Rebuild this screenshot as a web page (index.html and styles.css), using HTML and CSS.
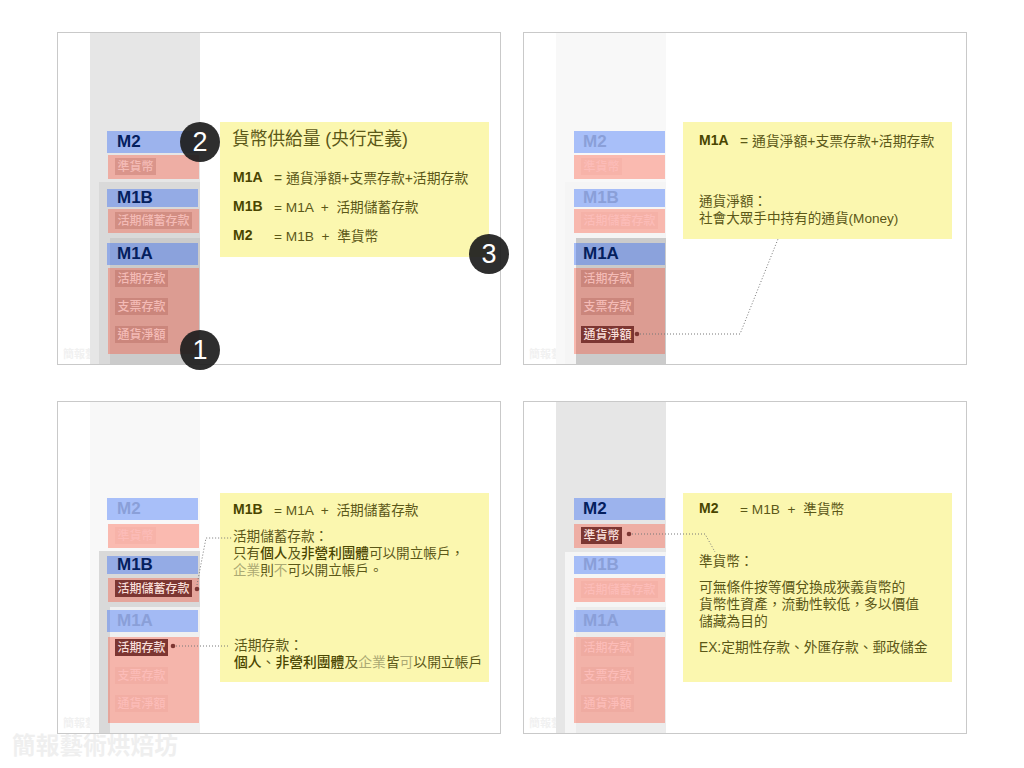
FILE: index.html
```html
<!DOCTYPE html>
<html lang="zh-Hant">
<head>
<meta charset="utf-8">
<title>貨幣供給量</title>
<link rel="stylesheet" href="styles.css">
</head>
<body>
<main class="page">
  <section class="slide s1">
    <div class="wm">簡報藝術烘焙坊</div>
    <div class="band b-m2 g-e6"></div><div class="band b-m1b g-d9"></div><div class="band b-m1a g-cb"></div>
    <div class="stack">
      <div class="bar h22"><span class="lab">M2</span></div>
      <div class="red r24"><span class="chip off">準貨幣</span></div>
      <div class="bar h18 sep"><span class="lab">M1B</span></div>
      <div class="red r24"><span class="chip off">活期儲蓄存款</span></div>
      <div class="bar h22 sep"><span class="lab">M1A</span></div>
      <div class="red r86"><span class="chip off">活期存款</span><span class="chip off">支票存款</span><span class="chip off">通貨淨額</span></div>
    </div>
    <div class="panel">
      <h2 class="head">貨幣供給量 (央行定義)</h2>
      <div class="rows">
        <div class="f"><b>M1A</b><span class="long">= 通貨淨額+支票存款+活期存款</span></div>
        <div class="f"><b>M1B</b><span>= M1A &nbsp;+ &nbsp;活期儲蓄存款</span></div>
        <div class="f"><b>M2</b><span>= M1B &nbsp;+ &nbsp;準貨幣</span></div>
      </div>
    </div>
    <div class="badge n2">2</div><div class="badge n1">1</div><div class="badge n3">3</div>
  </section>

  <section class="slide s2">
    <div class="wm">簡報藝術烘焙坊</div>
    <div class="band b-m2 g-f8"></div><div class="band b-m1b g-f5"></div><div class="band b-m1a g-cb"></div>
    <div class="stack">
      <div class="bar h22"><span class="lab dim">M2</span></div>
      <div class="red r24"><span class="chip faint">準貨幣</span></div>
      <div class="bar h18 sep"><span class="lab dim">M1B</span></div>
      <div class="red r24"><span class="chip faint">活期儲蓄存款</span></div>
      <div class="bar h22 sep"><span class="lab">M1A</span></div>
      <div class="red r86"><span class="chip off">活期存款</span><span class="chip off">支票存款</span><span class="chip on">通貨淨額</span></div>
    </div>
    <div class="panel">
      <div class="f"><b>M1A</b><span class="long">= 通貨淨額+支票存款+活期存款</span></div>
      <p class="para gap-a">通貨淨額：<br>社會大眾手中持有的通貨(Money)</p>
    </div>
    <svg class="wires" viewBox="0 0 442 331" aria-hidden="true">
      <polyline class="wire" points="113,301 216,301 254,206"/>
      <circle class="dot" cx="113" cy="301" r="2.3"/>
    </svg>
  </section>

  <section class="slide s3">
    <div class="wm">簡報藝術烘焙坊</div>
    <div class="band b-m2 g-f8"></div><div class="band b-m1b g-d9"></div><div class="band b-m1a g-f0"></div>
    <div class="stack">
      <div class="bar h22"><span class="lab dim">M2</span></div>
      <div class="red r24"><span class="chip faint">準貨幣</span></div>
      <div class="bar h18 sep"><span class="lab">M1B</span></div>
      <div class="red r24 first-tight"><span class="chip on">活期儲蓄存款</span></div>
      <div class="bar h22 sep"><span class="lab dim">M1A</span></div>
      <div class="red r86"><span class="chip on">活期存款</span><span class="chip faint">支票存款</span><span class="chip faint">通貨淨額</span></div>
    </div>
    <div class="panel">
      <div class="f"><b>M1B</b><span>= M1A &nbsp;+ &nbsp;活期儲蓄存款</span></div>
      <p class="para gap-b">活期儲蓄存款：<br>只有<strong>個人</strong>及<strong>非營利團體</strong>可以開立帳戶，<br><em>企業</em>則<em>不</em>可以開立帳戶。</p>
      <p class="para gap-c">活期存款：<br><strong>個人</strong>、<strong>非營利團體</strong>及<em>企業</em>皆<em>可</em>以開立帳戶</p>
    </div>
    <svg class="wires" viewBox="0 0 442 331" aria-hidden="true">
      <polyline class="wire" points="139,183 148,136 174,136"/>
      <polyline class="wire" points="115,244 172,244"/>
      <circle class="dot" cx="139" cy="187" r="2.3"/>
      <circle class="dot" cx="115" cy="244" r="2.3"/>
    </svg>
  </section>

  <section class="slide s4">
    <div class="wm">簡報藝術烘焙坊</div>
    <div class="band b-m2 g-e6"></div><div class="band b-m1b g-f5"></div><div class="band b-m1a g-ee"></div>
    <div class="stack">
      <div class="bar h22"><span class="lab">M2</span></div>
      <div class="red r24"><span class="chip on">準貨幣</span></div>
      <div class="bar h18 sep"><span class="lab dim">M1B</span></div>
      <div class="red r24"><span class="chip faint">活期儲蓄存款</span></div>
      <div class="bar h22 sep"><span class="lab dim">M1A</span></div>
      <div class="red r86"><span class="chip faint">活期存款</span><span class="chip faint">支票存款</span><span class="chip faint">通貨淨額</span></div>
    </div>
    <div class="panel">
      <div class="f"><b>M2</b><span>= M1B &nbsp;+ &nbsp;準貨幣</span></div>
      <p class="para gap-d">準貨幣：</p>
      <p class="para gap-e">可無條件按等價兌換成狹義貨幣的<br>貨幣性資產，流動性較低，多以價值<br>儲藏為目的</p>
      <p class="para gap-e">EX:定期性存款、外匯存款、郵政儲金</p>
    </div>
    <svg class="wires" viewBox="0 0 442 331" aria-hidden="true">
      <polyline class="wire" points="105,132 181,132 191,150"/>
      <circle class="dot" cx="105" cy="132" r="2.3"/>
    </svg>
  </section>
</main>
<footer class="brand">簡報藝術烘焙坊</footer>
</body>
</html>
```

FILE: styles.css
```css
html, body { margin: 0; padding: 0; }
body {
  width: 1024px;
  height: 768px;
  overflow: hidden;
  background: #fff;
  font-family: "Liberation Sans", "Noto Sans CJK TC", sans-serif;
}
.page {
  display: grid;
  grid-template-columns: 444px 444px;
  grid-template-rows: 333px 333px;
  gap: 36px 22px;
  padding: 32px 0 0 57px;
}
.slide {
  position: relative;
  box-sizing: border-box;
  border: 1px solid #c9c9c9;
  background: #fff;
}

/* faint mark under the bands */
.wm {
  position: absolute;
  left: 5px;
  bottom: 3px;
  font-size: 11px;
  line-height: 14px;
  font-weight: 700;
  color: #f1f1f1;
  white-space: nowrap;
}

/* grey group bands */
.band { position: absolute; bottom: 0; }
.b-m2 { left: 32px; width: 110px; top: 0; }
.b-m1b { left: 41px; width: 101px; top: 149px; }
.b-m1a { left: 52px; width: 90px; top: 205px; }
.s4 .b-m1b { top: 150px; }
.g-e6 { background: #e6e6e6; }
.g-d9 { background: #d9d9d9; }
.g-cb { background: #cbcbcb; }
.g-f8 { background: #f8f8f8; }
.g-f5 { background: #f5f5f5; }
.g-f0 { background: #f0f0f0; }
.g-ee { background: #ececec; }

/* stack of bars */
.stack {
  position: absolute;
  left: 49px;
  width: 91px;
  display: flex;
  flex-direction: column;
  --gap-a: 2px;
  --gap-b: 10px;
  --gap-c: 3px;
}
.s1 .stack, .s2 .stack { top: 98px; }
.s3 .stack, .s4 .stack { top: 96px; --gap-a: 4px; --gap-b: 8px; --gap-c: 5px; }
.bar {
  box-sizing: border-box;
  width: 91px;
  padding-left: 10px;
  background: rgba(15, 82, 253, .34);
  display: flex;
  align-items: center;
}
.s2 .bar, .s4 .bar { margin-left: 1px; padding-left: 9px; }
.h22 { height: 22px; }
.h18 { height: 18px; }
.sep { margin-top: var(--gap-b); }
.lab {
  font-size: 17px;
  font-weight: 700;
  line-height: 18px;
  color: #04205e;
}
.lab.dim { color: #8a9fd8; }
.red {
  box-sizing: border-box;
  width: 91px;
  margin-left: 1px;
  margin-top: var(--gap-a);
  padding: 3px 0 0 7px;
  background: rgba(255, 60, 30, .33);
  display: flex;
  flex-direction: column;
  align-items: flex-start;
  gap: 11px;
}
.r24 { height: 24px; }
.r86 { height: 86px; margin-top: var(--gap-c); padding-top: 2px; }
.first-tight { padding-top: 2px; }
.chip {
  height: 17px;
  padding: 0 2.5px;
  font-size: 12px;
  font-weight: 500;
  line-height: 19px;
  white-space: nowrap;
}
.chip.off { background: rgba(120, 30, 20, .17); color: #f4bbb6; }
.chip.faint { background: rgba(200, 50, 30, .05); color: #fcbcb8; }
.chip.on { background: #7c3632; color: #f8ded9; }

/* yellow note */
.panel {
  position: absolute;
  box-sizing: border-box;
  width: 269px;
  background: #fbf7af;
  color: #5b5818;
  font-size: 13.7px;
}
.s1 .panel { left: 162px; top: 89px; height: 135px; padding: 5px 0 0 13px; }
.s2 .panel { left: 159px; top: 89px; height: 117px; padding: 3px 0 0 16px; }
.s3 .panel { left: 162px; top: 91px; height: 189px; padding: 1px 0 0 13px; }
.s4 .panel { left: 159px; top: 91px; height: 189px; padding: 0 0 0 16px; }
.head {
  margin: 0 0 0 -1px;
  font-size: 17.7px;
  font-weight: 400;
  line-height: 24px;
  color: #5b5818;
}
.rows { margin-top: 11.5px; }
.f {
  display: flex;
  align-items: center;
  height: 29px;
  white-space: nowrap;
}
.f b {
  width: 41px;
  flex: none;
  font-size: 14px;
  color: #494500;
}
.long { font-size: 13.85px; }
.para {
  margin: 0;
  font-size: 13.6px;
  line-height: 17px;
  white-space: nowrap;
}
.para strong { font-weight: 500; color: #494500; }
.para em { font-style: normal; color: #aba973; }
.gap-a { margin-top: 39px; }
.gap-b { margin-top: 5px; }
.gap-c { margin-top: 58px; margin-left: 1px; font-size: 13.8px; }
.gap-d { margin-top: 31px; }
.gap-e { margin-top: 9px; font-size: 13.75px; }

/* connector lines */
.wires {
  position: absolute;
  left: 0;
  top: 0;
  width: 442px;
  height: 331px;
  pointer-events: none;
}
.wire { fill: none; stroke: #777; stroke-width: 1; stroke-dasharray: 1 2; }
.dot { fill: #7c3632; }

/* numbered badges */
.badge {
  position: absolute;
  width: 40px;
  height: 40px;
  border-radius: 50%;
  background: rgba(30, 30, 30, .93);
  color: #fff;
  font-size: 27px;
  line-height: 40px;
  text-align: center;
}
.n2 { left: 122px; top: 89px; }
.n1 { left: 122px; top: 297px; }
.n3 { left: 411px; top: 201px; }

.brand {
  margin: 0 0 0 12px;
  font-size: 23.7px;
  font-weight: 700;
  line-height: 24px;
  color: #efefef;
  white-space: nowrap;
}
```
